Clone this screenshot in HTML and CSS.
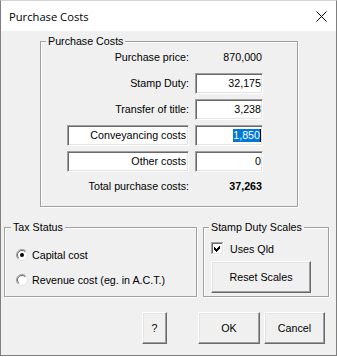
FILE: index.html
```html
<!DOCTYPE html>
<html>
<head>
<meta charset="utf-8">
<title>Purchase Costs</title>
<link rel="stylesheet" href="styles.css">
</head>
<body>
<div class="window">
  <div class="titlebar">
    <span class="title">Purchase Costs</span>
    <svg class="close" width="11" height="11" viewBox="0 0 11 11"><path d="M0.5 0.5 L10.5 10.5 M10.5 0.5 L0.5 10.5" stroke="#000" stroke-width="1" fill="none"/></svg>
  </div>
  <div class="client">
    <div class="group costs">
      <span class="legend">Purchase Costs</span>
      <div class="grid">
        <div class="label">Purchase price:</div>
        <div class="value">870,000</div>
        <div class="label">Stamp Duty:</div>
        <div class="field">32,175</div>
        <div class="label">Transfer of title:</div>
        <div class="field">3,238</div>
        <div class="field wide">Conveyancing costs</div>
        <div class="field"><span class="sel">1,850</span></div>
        <div class="field wide">Other costs</div>
        <div class="field">0</div>
        <div class="label total">Total purchase costs:</div>
        <div class="value total bold">37,263</div>
      </div>
    </div>
    <div class="lower">
      <div class="group tax">
        <span class="legend">Tax Status</span>
        <div class="opt">
          <svg width="12" height="12" viewBox="0 0 12 12"><circle cx="6" cy="6" r="5.5" fill="#fff" stroke="#e3e3e3"/><path d="M2.1 9.9 A5.5 5.5 0 0 1 9.9 2.1" fill="none" stroke="#a0a0a0"/><path d="M2.8 9.2 A4.5 4.5 0 0 1 9.2 2.8" fill="none" stroke="#696969"/><circle cx="6" cy="6" r="2" fill="#000"/></svg>
          <span>Capital cost</span>
        </div>
        <div class="opt">
          <svg width="12" height="12" viewBox="0 0 12 12"><circle cx="6" cy="6" r="5.5" fill="#fff" stroke="#e3e3e3"/><path d="M2.1 9.9 A5.5 5.5 0 0 1 9.9 2.1" fill="none" stroke="#a0a0a0"/><path d="M2.8 9.2 A4.5 4.5 0 0 1 9.2 2.8" fill="none" stroke="#696969"/></svg>
          <span>Revenue cost (eg. in A.C.T.)</span>
        </div>
      </div>
      <div class="group scales">
        <span class="legend">Stamp Duty Scales</span>
        <div class="opt check">
          <svg width="13" height="13" viewBox="0 0 13 13" shape-rendering="crispEdges"><rect x="0" y="0" width="13" height="13" fill="#fff"/><path d="M0.5 12 V0.5 H12.5" stroke="#a0a0a0" fill="none"/><path d="M1.5 11 V1.5 H11.5" stroke="#696969" fill="none"/><path d="M0 12.5 H12.5 V0" stroke="#fff" fill="none"/><path d="M1 11.5 H11.5 V1" stroke="#e3e3e3" fill="none"/><polygon points="3,5 5,7 9,3 9,6 5,10 3,8" fill="#000"/></svg>
          <span>Uses Qld</span>
        </div>
        <div class="btn reset">Reset Scales</div>
      </div>
    </div>
    <div class="buttons">
      <div class="btn help">?</div>
      <div class="btn ok">OK</div>
      <div class="btn cancel">Cancel</div>
    </div>
  </div>
</div>
</body>
</html>
```

FILE: styles.css
```css
html, body {
  margin: 0;
  padding: 0;
  background: #ffffff;
}

.window {
  box-sizing: border-box;
  width: 337px;
  height: 356px;
  border: 1px solid #7f7f7f;
  border-top-color: #d4d4d4;
  display: flex;
  flex-direction: column;
  font-family: "Liberation Sans", Arial, sans-serif;
  font-size: 10.7px;
  color: #000;
}

.titlebar {
  height: 30px;
  flex: none;
  background: #fff;
  display: flex;
  align-items: center;
  justify-content: space-between;
  padding: 0 9px 0 8px;
}

.title {
  font-family: "Open Sans", "Liberation Sans", sans-serif;
  font-size: 11.2px;
  margin-top: 1px;
}

.close {
  display: block;
  margin-top: 1px;
}

.client {
  flex: 1;
  background: #f0f0f0;
  display: flex;
  flex-direction: column;
}

.group {
  position: relative;
  box-sizing: border-box;
  border: 1px solid #a0a0a0;
  box-shadow: inset 1px 1px 0 #fff, 1px 1px 0 #fff;
}

.legend {
  position: absolute;
  top: -7px;
  left: 5px;
  padding: 0 2px;
  line-height: 13px;
  background: #f0f0f0;
  white-space: nowrap;
}

.costs {
  margin: 10px 0 0 39px;
  width: 258px;
  height: 166px;
  padding: 5px 34px 0 26px;
}

.grid {
  display: grid;
  grid-template-columns: 122px 68px;
  grid-auto-rows: 21px;
  column-gap: 6px;
  row-gap: 5px;
}

.label {
  display: flex;
  align-items: center;
  justify-content: flex-end;
  padding-bottom: 1px;
  white-space: nowrap;
}

.value {
  display: flex;
  align-items: center;
  justify-content: flex-end;
  padding-right: 1px;
  padding-bottom: 1px;
}

.total {
  margin-top: -2px;
}

.bold {
  font-weight: bold;
}

.field {
  box-sizing: border-box;
  background: #fff;
  border: 1px solid;
  border-color: #a0a0a0 #fff #fff #a0a0a0;
  box-shadow: inset 1px 1px 0 #696969, inset -1px -1px 0 #e3e3e3;
  display: flex;
  align-items: center;
  justify-content: flex-end;
  padding: 0 1px 1px 0;
  white-space: nowrap;
}

.field.wide {
  padding-right: 2px;
}

.sel {
  display: inline-block;
  line-height: 13px;
  background: #0078d7;
  color: #fff;
  box-shadow: 1px 0 0 #000;
  margin-right: 1px;
}

.lower {
  display: flex;
  margin: 20px 0 0 3px;
  gap: 6px;
}

.tax {
  width: 193px;
  height: 70px;
  padding: 20px 0 0 11px;
}

.tax .legend {
  left: 6px;
}

.opt {
  display: flex;
  align-items: center;
  height: 13px;
  gap: 4px;
  white-space: nowrap;
}

.opt + .opt {
  margin-top: 12px;
}

.opt svg {
  display: block;
  flex: none;
}

.scales {
  width: 126px;
  height: 70px;
  padding: 14px 0 0 7px;
}

.check {
  gap: 6px;
}

.btn {
  box-sizing: border-box;
  height: 32px;
  background: #f0f0f0;
  border: 1px solid;
  border-color: #fff #696969 #696969 #fff;
  box-shadow: inset -1px -1px 0 #a0a0a0, inset 1px 1px 0 #e3e3e3;
  display: flex;
  align-items: center;
  justify-content: center;
  padding-bottom: 1px;
}

.reset {
  width: 100px;
  margin-top: 6px;
}

.buttons {
  display: flex;
  justify-content: flex-end;
  margin-top: 15px;
  padding-right: 11px;
}

.help {
  width: 25px;
  margin-right: 31px;
}

.ok {
  width: 62px;
  margin-right: 4px;
}

.cancel {
  width: 61px;
}
```
